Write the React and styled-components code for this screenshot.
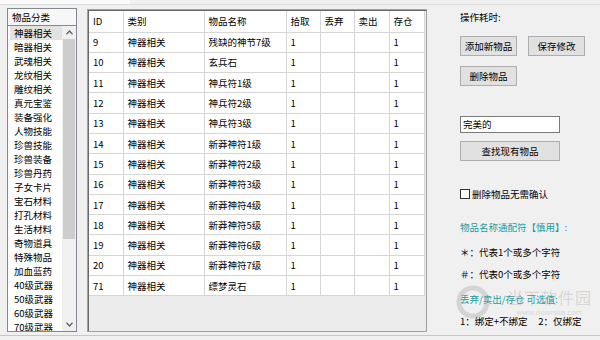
import React from "react";
import styled, { createGlobalStyle } from "styled-components";

const GlobalStyle = createGlobalStyle`
  html, body { margin: 0; padding: 0; background: #f0f0f0; }
  body { font-family: "Noto Sans CJK SC", "Noto Sans", sans-serif; font-size: 9.5px; color: #000; }
  * { box-sizing: border-box; }
`;

const Window = styled.div`
  position: relative;
  width: 600px;
  height: 340px;
  overflow: hidden;
  background: #f0f0f0;
  display: flex;
  flex-direction: column;
`;

const TabStrip = styled.div`
  height: 5px;
  display: flex;
  border-bottom: 1px solid #dcdcdc;
`;

const Tab = styled.div`
  width: 130px;
  height: 4px;
  background: #fafafa;
`;

const Main = styled.div`
  display: flex;
  height: 331px;
  padding: 3px 0 0 7px;
  border-bottom: 1px solid #c8c8c8;
`;

const ListBox = styled.div`
  width: 70px;
  height: 324px;
  border: 1px solid #828790;
  background: #fff;
  display: flex;
  flex-direction: column;
`;

const ListHeader = styled.div`
  height: 17px;
  line-height: 16px;
  padding-left: 4px;
  background: #f7f7f7;
  border-bottom: 1px solid #828790;
  font-size: 9.5px;
`;

const ListBody = styled.div`
  flex: 1;
  display: flex;
  overflow: hidden;
`;

const Items = styled.div`
  flex: 1;
  padding-left: 2px;
  overflow: hidden;
`;

const Item = styled.div`
  height: 14px;
  line-height: 14px;
  padding-left: 4px;
  font-size: 9.5px;
  white-space: nowrap;
  background: ${(p) => (p.$selected ? "#e2e2e2" : "transparent")};
`;

const ScrollBar = styled.div`
  width: 14px;
  background: #f0f0f0;
  display: flex;
  flex-direction: column;
`;

const ScrollArrow = styled.div`
  height: 13px;
  display: flex;
  align-items: center;
  justify-content: center;
`;

const ScrollTrack = styled.div`
  flex: 1;
  padding: 0 1px;
`;

const Thumb = styled.div`
  height: 200px;
  background: #cdcdcd;
`;

const GridFrame = styled.div`
  margin-left: 10px;
  margin-top: 1px;
  width: 340px;
  height: 323px;
  border: 1px solid #a0a0a0;
  box-shadow: inset 1px 1px 0 #696969;
  background: #ececec;
  padding: 1px 0 0 1px;
  overflow: hidden;
`;

const Table = styled.table`
  border-collapse: collapse;
  table-layout: fixed;
  width: 335px;
  background: #fff;
`;

const Th = styled.th`
  height: 21px;
  padding: 0 0 0 4px;
  font-weight: normal;
  text-align: left;
  border-right: 1px solid #d6d6d6;
  border-bottom: 1px solid #d6d6d6;
  font-size: 9.5px;
`;

const Td = styled.td`
  height: 20.3px;
  padding: 0 0 0 4px;
  border-right: 1px solid #d6d6d6;
  border-bottom: 1px solid #d6d6d6;
  font-size: 9.5px;
  white-space: nowrap;
  overflow: hidden;
`;

const Right = styled.div`
  flex: 1;
  padding: 2px 0 0 33px;
  display: flex;
  flex-direction: column;
`;

const Label = styled.div`
  font-size: 9.5px;
  height: 14px;
  line-height: 14px;
  white-space: pre;
  margin-top: ${(p) => p.$mt || 0}px;
  color: ${(p) => (p.$teal ? "#1f9c9c" : "#000")};
`;

const ButtonRow = styled.div`
  display: flex;
  gap: 11px;
  margin-top: ${(p) => p.$mt || 0}px;
`;

const Button = styled.div`
  width: ${(p) => p.$w || 57}px;
  height: 20px;
  margin-top: ${(p) => p.$mt || 0}px;
  background: #e1e1e1;
  border: 1px solid #adadad;
  display: flex;
  align-items: center;
  justify-content: center;
  font-size: 9.5px;
`;

const TextBox = styled.div`
  width: 100px;
  height: 17px;
  margin-top: ${(p) => p.$mt || 0}px;
  background: #fff;
  border: 1px solid #7a7a7a;
  padding-left: 2px;
  line-height: 15px;
  font-size: 9.5px;
`;

const CheckRow = styled.div`
  display: flex;
  align-items: center;
  gap: 2px;
  height: 14px;
  margin-top: ${(p) => p.$mt || 0}px;
  font-size: 9.5px;
`;

const CheckBox = styled.div`
  width: 10px;
  height: 10px;
  border: 1px solid #333;
  background: #fff;
`;

const Watermark = styled.div`
  position: absolute;
  left: 455px;
  top: 284px;
  display: flex;
  align-items: center;
  gap: 16px;
  color: rgba(150, 150, 150, 0.3);
  pointer-events: none;
`;

const WmText = styled.div`
  display: flex;
  flex-direction: column;
  align-items: center;
`;

const WmBig = styled.div`
  font-size: 16px;
  letter-spacing: 1px;
  line-height: 22px;
`;

const WmSmall = styled.div`
  font-family: "Liberation Sans", sans-serif;
  font-size: 8px;
  line-height: 10px;
`;

const categories = [
  "神器相关", "暗器相关", "武魂相关", "龙纹相关", "雕纹相关", "真元宝鉴", "装备强化",
  "人物技能", "珍兽技能", "珍兽装备", "珍兽丹药", "子女卡片", "宝石材料", "打孔材料",
  "生活材料", "奇物道具", "特殊物品", "加血蓝药", "40级武器", "50级武器", "60级武器", "70级武器",
];

const rows = [
  [9, "残缺的神节7级"], [10, "玄兵石"], [11, "神兵符1级"], [12, "神兵符2级"], [13, "神兵符3级"],
  [14, "新莽神符1级"], [15, "新莽神符2级"], [16, "新莽神符3级"], [17, "新莽神符4级"],
  [18, "新莽神符5级"], [19, "新莽神符6级"], [20, "新莽神符7级"], [71, "缥梦灵石"],
];

const cols = [
  ["ID", 34], ["类别", 81], ["物品名称", 82], ["拾取", 34], ["丢弃", 34], ["卖出", 35], ["存仓", 35],
];

const Chevron = ({ up }) => (
  <svg width="7" height="5" viewBox="0 0 7 5">
    <path d={up ? "M0.5 4.2 L3.5 1 L6.5 4.2" : "M0.5 0.8 L3.5 4 L6.5 0.8"} fill="none" stroke="#606060" strokeWidth="1.3" />
  </svg>
);

const WmLogo = () => (
  <svg width="36" height="36" viewBox="0 0 36 36">
    <circle cx="18" cy="18" r="14" fill="none" stroke="rgba(150,150,150,0.3)" strokeWidth="5" />
  </svg>
);

export default function App() {
  return (
    <Window>
      <GlobalStyle />
      <TabStrip><Tab /></TabStrip>
      <Main>
        <ListBox>
          <ListHeader>物品分类</ListHeader>
          <ListBody>
            <Items>
              {categories.map((c, i) => (
                <Item key={c} $selected={i === 0}>{c}</Item>
              ))}
            </Items>
            <ScrollBar>
              <ScrollArrow><Chevron up /></ScrollArrow>
              <ScrollTrack><Thumb /></ScrollTrack>
              <ScrollArrow><Chevron /></ScrollArrow>
            </ScrollBar>
          </ListBody>
        </ListBox>
        <GridFrame>
          <Table>
            <colgroup>
              {cols.map(([n, w]) => <col key={n} style={{ width: w }} />)}
            </colgroup>
            <thead>
              <tr>{cols.map(([n]) => <Th key={n}>{n}</Th>)}</tr>
            </thead>
            <tbody>
              {rows.map(([id, name]) => (
                <tr key={id}>
                  <Td>{id}</Td>
                  <Td>神器相关</Td>
                  <Td>{name}</Td>
                  <Td>1</Td>
                  <Td></Td>
                  <Td></Td>
                  <Td>1</Td>
                </tr>
              ))}
            </tbody>
          </Table>
        </GridFrame>
        <Right>
          <Label>操作耗时:</Label>
          <ButtonRow $mt={12}>
            <Button>添加新物品</Button>
            <Button>保存修改</Button>
          </ButtonRow>
          <ButtonRow $mt={10}>
            <Button>删除物品</Button>
          </ButtonRow>
          <TextBox $mt={30}>完美的</TextBox>
          <Button $w={100} $mt={8}>查找现有物品</Button>
          <CheckRow $mt={26}>
            <CheckBox />
            <span>删除物品无需确认</span>
          </CheckRow>
          <Label $teal $mt={19}>物品名称通配符【慎用】:</Label>
          <Label $mt={11}>＊：代表1个或多个字符</Label>
          <Label $mt={8}>＃：代表0个或多个字符</Label>
          <Label $teal $mt={11}>丢弃/卖出/存仓 可选值:</Label>
          <Label $mt={8}>{"1：绑定+不绑定     2：仅绑定"}</Label>
        </Right>
      </Main>
      <Watermark>
        <WmLogo />
        <WmText>
          <WmBig>当下软件园</WmBig>
          <WmSmall>www.downxia.com</WmSmall>
        </WmText>
      </Watermark>
    </Window>
  );
}
